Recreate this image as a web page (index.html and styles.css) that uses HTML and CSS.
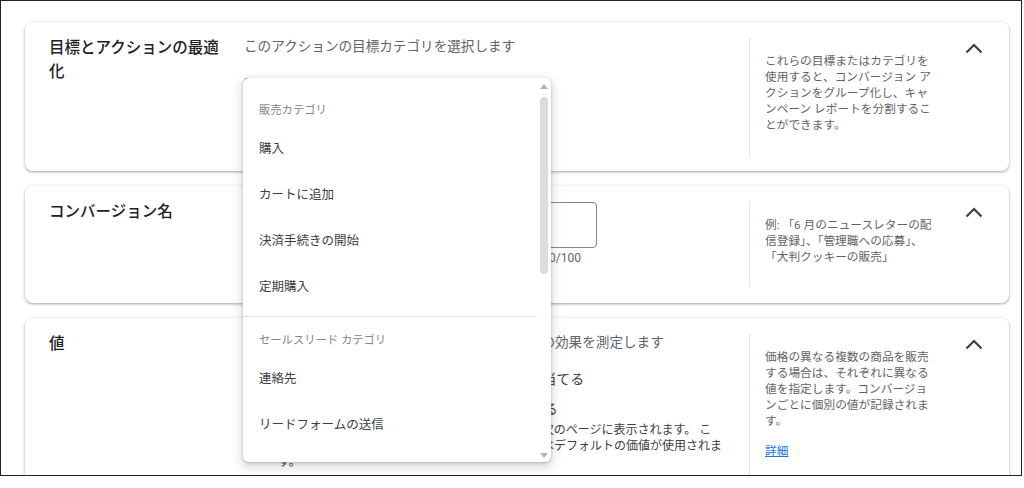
FILE: index.html
```html
<!DOCTYPE html>
<html lang="ja">
<head>
<meta charset="utf-8">
<title>コンバージョン アクション</title>
<link rel="stylesheet" href="styles.css">
</head>
<body>
<div class="frame">
  <section class="card">
    <h2 class="title">目標とアクションの最適化</h2>
    <div class="main">
      <p class="label">このアクションの目標カテゴリを選択します</p>
      <div class="select">
        <div class="menu">
          <div class="menu-list">
            <div class="menu-head first">販売カテゴリ</div>
            <div class="menu-item">購入</div>
            <div class="menu-item">カートに追加</div>
            <div class="menu-item">決済手続きの開始</div>
            <div class="menu-item">定期購入</div>
            <div class="menu-divider"></div>
            <div class="menu-head">セールスリード カテゴリ</div>
            <div class="menu-item">連絡先</div>
            <div class="menu-item">リードフォームの送信</div>
            <div class="menu-item">予約</div>
          </div>
          <div class="menu-scroll">
            <span class="arrow-up"></span>
            <span class="thumb"></span>
            <span class="spacer"></span>
            <span class="arrow-down"></span>
          </div>
        </div>
      </div>
    </div>
    <aside class="help">これらの目標またはカテゴリを使用すると、コンバージョン アクションをグループ化し、キャンペーン レポートを分割することができます。</aside>
    <div class="toggle">
      <svg viewBox="0 0 24 24" width="24" height="24"><polyline points="4.5,16.5 12,9 19.5,16.5" fill="none" stroke="#3c4043" stroke-width="2.2"/></svg>
    </div>
  </section>

  <section class="card">
    <h2 class="title">コンバージョン名</h2>
    <div class="main">
      <div class="input"></div>
      <div class="counter">0/100</div>
    </div>
    <aside class="help">例: 「6 月のニュースレターの配信登録」、「管理職への応募」、「大判クッキーの販売」</aside>
    <div class="toggle">
      <svg viewBox="0 0 24 24" width="24" height="24"><polyline points="4.5,16.5 12,9 19.5,16.5" fill="none" stroke="#3c4043" stroke-width="2.2"/></svg>
    </div>
  </section>

  <section class="card">
    <h2 class="title">値</h2>
    <div class="main">
      <p class="label">コンバージョンに値を割り当てて、キャンペーンの効果を測定します</p>
      <div class="option first"><span class="radio"></span><span>すべてのコンバージョンに同一の値を割り当てる</span></div>
      <div class="option"><span class="radio"></span><span>コンバージョンごとに異なる値を割り当てる</span></div>
      <p class="desc">取引固有の値を実装する方法についての手順は、次のページに表示されます。 こ<br>のような値が取引ごとに送信されなかった場合にはデフォルトの価値が使用されま<br>す。</p>
    </div>
    <aside class="help">価格の異なる複数の商品を販売する場合は、それぞれに異なる値を指定します。コンバージョンごとに個別の値が記録されます。<a class="more" href="#">詳細</a></aside>
    <div class="toggle">
      <svg viewBox="0 0 24 24" width="24" height="24"><polyline points="4.5,16.5 12,9 19.5,16.5" fill="none" stroke="#3c4043" stroke-width="2.2"/></svg>
    </div>
  </section>
</div>
</body>
</html>
```

FILE: styles.css
```css
html, body {
  margin: 0;
  padding: 0;
  background: #fff;
}
body {
  font-family: Roboto, "Noto Sans CJK JP", sans-serif;
  color: #3c4043;
}
.frame {
  width: 1022px;
  height: 476px;
  box-sizing: border-box;
  border: 1px solid #222;
  overflow: hidden;
  padding: 21px 12px 0 24px;
  background: #fff;
}
.card {
  display: flex;
  align-items: stretch;
  background: #fff;
  border-radius: 8px;
  box-shadow: 0 1px 2px rgba(60, 64, 67, 0.3), 0 1px 3px 1px rgba(60, 64, 67, 0.15);
  margin-bottom: 15px;
  padding-left: 24px;
}
.title {
  margin: 0 15px 0 0;
  padding-top: 14px;
  width: 180px;
  flex: none;
  font-size: 15.5px;
  line-height: 24px;
  font-weight: 500;
  color: #202124;
}
.main {
  flex: 1;
  padding-top: 14px;
  min-width: 0;
}
.label {
  margin: 0;
  font-size: 13.6px;
  line-height: 20px;
  color: #5f6368;
  white-space: nowrap;
}
.select {
  position: relative;
  margin-top: 22px;
  width: 300px;
  height: 56px;
  box-sizing: border-box;
  border: 2px solid #1a73e8;
  border-radius: 4px;
}
.menu {
  position: absolute;
  left: -3px;
  top: -2px;
  z-index: 10;
  width: 308px;
  height: 384px;
  display: flex;
  background: #fff;
  border-radius: 6px;
  overflow: hidden;
  box-shadow: 0 1px 3px rgba(60, 64, 67, 0.3), 0 4px 8px 3px rgba(60, 64, 67, 0.15);
}
.menu-list {
  flex: 1;
}
.menu-head {
  padding: 15px 16px 6px;
  font-size: 11.3px;
  line-height: 18px;
  color: #80868b;
}
.menu-head.first {
  padding-top: 24px;
}
.menu-item {
  height: 46px;
  line-height: 46px;
  padding: 0 16px;
  font-size: 12.5px;
  color: #3c4043;
}
.menu-divider {
  margin-top: 6px;
  height: 1px;
  background: #e0e0e0;
}
.menu-scroll {
  width: 14px;
  flex: none;
  display: flex;
  flex-direction: column;
  align-items: center;
}
.arrow-up {
  margin-top: 6px;
  width: 0;
  height: 0;
  border-left: 4px solid transparent;
  border-right: 4px solid transparent;
  border-bottom: 5px solid #b4b4b8;
}
.thumb {
  margin-top: 8px;
  width: 8px;
  height: 177px;
  border-radius: 4px;
  background: #dadce0;
}
.spacer {
  flex: 1;
}
.arrow-down {
  margin-bottom: 4px;
  width: 0;
  height: 0;
  border-left: 4px solid transparent;
  border-right: 4px solid transparent;
  border-top: 5px solid #b4b4b8;
}
.input {
  margin-top: 2px;
  width: 353px;
  height: 46px;
  box-sizing: border-box;
  border: 1px solid #80868b;
  border-radius: 4px;
}
.counter {
  margin-top: 2px;
  width: 353px;
  box-sizing: border-box;
  padding-right: 16px;
  text-align: right;
  font-size: 12px;
  line-height: 16px;
  color: #5f6368;
}
.option {
  display: flex;
  align-items: center;
  gap: 14px;
  margin-top: 10px;
  font-size: 14px;
  line-height: 20px;
  color: #3c4043;
  white-space: nowrap;
}
.option.first {
  margin-top: 17px;
}
.radio {
  width: 20px;
  height: 20px;
  box-sizing: border-box;
  border: 2px solid #5f6368;
  border-radius: 50%;
  flex: none;
}
.desc {
  margin: 3px 0 0;
  padding-left: 34px;
  white-space: nowrap;
  font-size: 12px;
  line-height: 16px;
  color: #3c4043;
}
.help {
  flex: none;
  width: 173px;
  margin: 16px 0;
  padding: 15px 0 22px 15px;
  border-left: 1px solid #e3e3e3;
  font-size: 11.7px;
  line-height: 16px;
  color: #5f6368;
}
.more {
  display: block;
  margin-top: 14px;
  color: #1a73e8;
  text-decoration: underline;
  width: max-content;
}
.toggle {
  flex: none;
  width: 24px;
  height: 24px;
  margin: 14px 23px 0 24px;
}
.toggle svg {
  display: block;
}
```
